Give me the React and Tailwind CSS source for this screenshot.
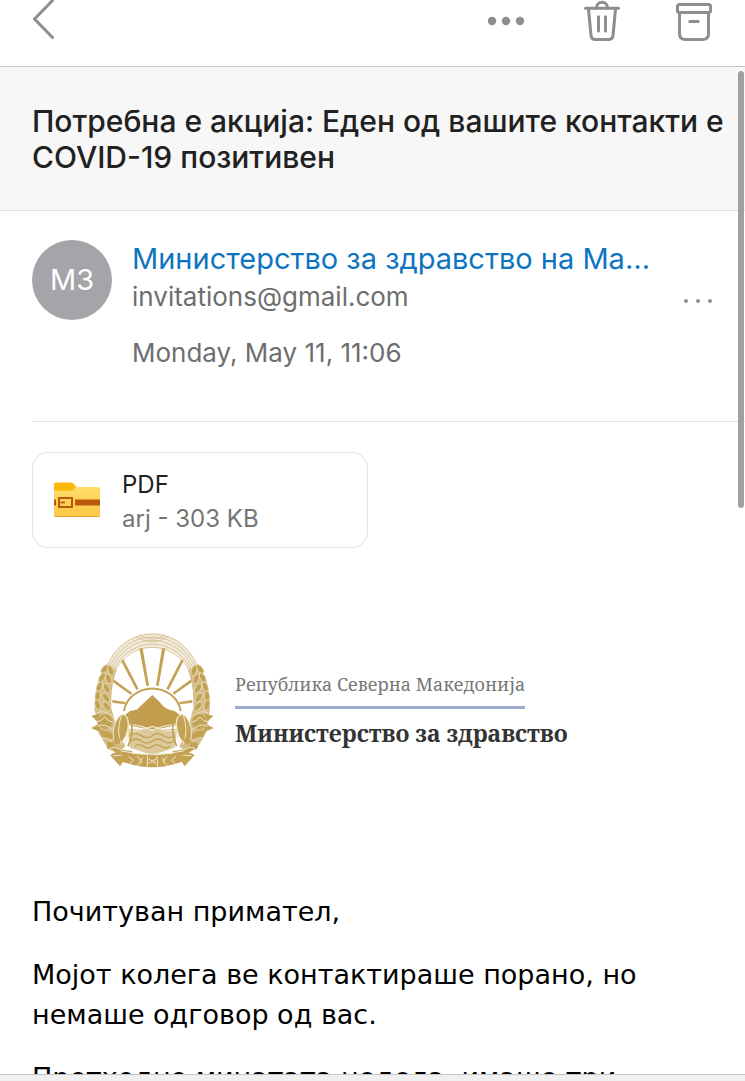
import React from 'react';

const message = {
  subject: 'Потребна е акција: Еден од вашите контакти е COVID-19 позитивен',
  initials: 'МЗ',
  sender: 'Министерство за здравство на Македонија',
  email: 'invitations@gmail.com',
  date: 'Monday, May 11, 11:06',
  attachment: { name: 'PDF', info: 'arj - 303 KB' },
  body: [
    'Почитуван примател,',
    'Мојот колега ве контактираше порано, но немаше одговор од вас.',
    'Претходно минатата недела, имаше три',
  ],
};

function BackIcon() {
  return (
    <svg width="22" height="42" viewBox="0 0 22 42" fill="none" stroke="#8e8e8e" strokeWidth="3" strokeLinecap="round" strokeLinejoin="round">
      <path d="M20.5 0.5 L2.5 19 L20.5 37.5" />
    </svg>
  );
}

function DotsIcon() {
  return (
    <svg width="40" height="42" viewBox="0 0 40 42" fill="#8e8e8e">
      <circle cx="4" cy="21" r="4.2" />
      <circle cx="18" cy="21" r="4.2" />
      <circle cx="32" cy="21" r="4.2" />
    </svg>
  );
}

function TrashIcon() {
  return (
    <svg width="36" height="42" viewBox="0 0 36 42" fill="none" stroke="#8e8e8e" strokeWidth="3" strokeLinecap="round" strokeLinejoin="round">
      <path d="M1.5 8.3 H34.5" />
      <path d="M12.5 8 C12.5 4.5 15 2.2 18 2.2 C21 2.2 23.5 4.5 23.5 8" />
      <path d="M4.5 9 L7 35.5 Q7.4 39.5 11.5 39.5 H24.5 Q28.6 39.5 29 35.5 L31.5 9" />
      <path d="M14.5 16.8 V31 M21.5 16.8 V31" />
    </svg>
  );
}

function ArchiveIcon() {
  return (
    <svg width="36" height="42" viewBox="0 0 36 42" fill="none" stroke="#8e8e8e" strokeWidth="3" strokeLinecap="round" strokeLinejoin="round">
      <rect x="1.5" y="4.5" width="33" height="8" rx="2" />
      <path d="M3.5 13 V33.5 Q3.5 39.5 9.5 39.5 H26.5 Q32.5 39.5 32.5 33.5 V13" />
      <path d="M13.8 21.5 H22.2" />
    </svg>
  );
}

function ArchiveFolderIcon() {
  return (
    <svg width="46" height="36" viewBox="0 0 46 36">
      <defs>
        <linearGradient id="folder" x1="0" y1="0" x2="0" y2="1">
          <stop offset="0" stopColor="#ffdc69" />
          <stop offset="1" stopColor="#fcc846" />
        </linearGradient>
      </defs>
      <path d="M0 8 H18 L23 5 H44 Q46 5 46 7 V32.5 Q46 34.5 44 34.5 H2 Q0 34.5 0 32.5 Z" fill="url(#folder)" />
      <path d="M0 33 Q0 34.5 2 34.5 H44 Q46 34.5 46 33" fill="none" stroke="#e0a030" />
      <path d="M2 0.5 H17 Q18.5 0.5 19.5 1.5 L22.5 5 L19.5 7.8 Q18.5 8.8 17 8.8 H0 V2.5 Q0 0.5 2 0.5 Z" fill="#fbb90c" />
      <rect x="0" y="17.5" width="2" height="6" fill="#b9580d" />
      <rect x="21" y="17.5" width="25" height="6" fill="#b9580d" />
      <rect x="5" y="16" width="13" height="9" fill="none" stroke="#b9580d" strokeWidth="2" />
      <path d="M6.5 20.5 H11" stroke="#b9580d" strokeWidth="1.8" />
    </svg>
  );
}

const rays = [
  [178, 84, 188, 84, 207, 196, 199, 196],
  [256, 84, 246, 84, 228, 196, 236, 196],
  [123, 121, 130, 117, 176, 205, 169, 209],
  [311, 121, 304, 117, 259, 205, 266, 209],
  [97, 184, 101, 177, 156, 217, 152, 223],
  [337, 184, 333, 177, 278, 217, 282, 223],
  [97, 247, 97, 239, 137, 245, 136, 252],
  [337, 247, 337, 239, 298, 245, 299, 252],
];

// [x, y, angle] of each grain on the left half of the wreath
const grains = [
  [74, 146, 40], [92, 150, -20], [66, 172, 30], [86, 176, -25], [58, 200, 20], [80, 204, -30],
  [53, 228, 5], [78, 232, -35], [53, 254, -15], [80, 258, -40],
];

function WreathSide() {
  return (
    <g>
      <path d="M84 132 C56 160 42 210 44 268 L50 300 L56 338 L76 372 L104 396 L136 380 L106 310 L94 262 C92 220 98 180 110 150 Z" fill="#d3bb84" />
      {grains.map(([x, y, a]) => (
        <ellipse key={`${x}-${y}`} cx={x} cy={y} rx="8" ry="16" transform={`rotate(${a} ${x} ${y})`} fill="#c4a253" stroke="#f0e6cf" strokeWidth="2" />
      ))}
      <circle cx="76" cy="304" r="22" fill="#c4a253" />
      <path d="M34 286 L60 280 L52 304 Z M33 323 L58 310 L62 336 Z" fill="#c4a253" />
      <path d="M50 278 Q72 266 100 290 M48 304 Q62 306 74 290 Q84 304 100 306 M52 318 Q76 306 98 330" fill="none" stroke="#f0e6cf" strokeWidth="3" />
      <path d="M58 334 Q82 322 106 350 Q88 364 66 350 Z" fill="#c4a253" />
      <ellipse cx="122" cy="326" rx="21" ry="44" transform="rotate(12 122 326)" fill="#c4a253" stroke="#f0e6cf" strokeWidth="3" />
      <path d="M124 286 Q108 330 124 372 M142 290 Q154 330 134 374" fill="none" stroke="#f0e6cf" strokeWidth="3" />
      <path d="M148 284 Q166 330 144 378" fill="none" stroke="#c4a253" strokeWidth="5" />
      <circle cx="92" cy="376" r="12" fill="#c4a253" />
      <circle cx="112" cy="362" r="10" fill="#c4a253" />
      <path d="M92 378 Q120 400 156 398" fill="none" stroke="#c4a253" strokeWidth="14" />
      <path d="M90 404 L128 386 L152 418 L132 420 L120 438 Z" fill="#c4a253" />
      <path d="M68 352 Q92 354 96 366 M84 388 Q104 372 130 394 M100 406 L134 404" fill="none" stroke="#f0e6cf" strokeWidth="3" />
    </g>
  );
}

function Emblem() {
  return (
    <svg className="shrink-0" width="125" height="137" viewBox="30 35 375 411" role="img" aria-label="Грб">
      <path d="M72 160 C92 90 145 40 217 40 C289 40 342 90 362 160 L332 166 C320 112 275 82 217 82 C159 82 114 112 102 166 Z" fill="#f1eadb" />
      <g fill="none" stroke="#d2bd8b" strokeWidth="2.5">
        <path d="M78 144 C104 80 155 41 217 41 C279 41 330 80 356 144" />
        <path d="M84 148 C108 92 157 50 217 50 C277 50 326 92 350 148" />
        <path d="M90 152 C112 102 159 60 217 60 C275 60 322 102 344 152" />
        <path d="M96 156 C116 112 161 71 217 71 C273 71 318 112 338 156" />
        <path d="M101 160 C120 118 163 81 217 81 C271 81 314 118 333 160" />
        <path d="M168 48 Q217 82 266 48 M178 44 Q217 68 256 44" />
      </g>
      {rays.map((r) => (
        <polygon key={r.join()} points={r.join(' ')} fill="#c4a253" />
      ))}
      <path d="M132 272 A86 80 0 0 1 302 272" fill="none" stroke="#c4a253" strokeWidth="6" />
      <path d="M132 286 L150 272 L170 268 L217 224 L236 242 L252 260 L268 268 L284 272 L302 286 L292 314 L217 330 L142 314 Z" fill="#c19d4d" />
      <path d="M142 326 H292 L284 382 L217 404 L150 382 Z" fill="#dcc99c" />
      <path d="M148 332 Q180 332 217 318 Q254 332 286 332 M148 312 Q190 316 217 330 Q244 316 286 312" fill="none" stroke="#f0e6cf" strokeWidth="4" />
      <g fill="none" stroke="#c4a253" strokeWidth="4">
        <path d="M150 346 Q166 334 184 346 T217 346 T250 346 T284 346" />
        <path d="M152 362 Q168 350 184 362 T217 362 T250 362 T282 362" />
        <path d="M164 378 Q174 368 190 378 T217 378 T244 378 T270 378" />
      </g>
      <WreathSide />
      <g transform="translate(434 0) scale(-1 1)">
        <WreathSide />
      </g>
      <path d="M124 396 Q217 412 310 396 L306 424 Q217 458 128 424 Z" fill="#c4a253" />
      <g fill="none" stroke="#f0e6cf" strokeWidth="3">
        <path d="M146 408 L160 420 L148 430 M172 408 L186 424 L170 436 M262 408 L248 424 L264 436 M288 408 L274 420 L286 430" />
        <path d="M203 406 L201 442 M231 406 L233 442 M206 416 L228 430 M228 416 L206 430 M188 412 L178 424 M246 412 L256 424" />
        <path d="M124 392 Q217 412 310 392" />
      </g>
    </svg>
  );
}

export default function App() {
  return (
    <div className="flex h-screen flex-col bg-white font-['Inter',sans-serif] text-[#212121]">
      <header className="flex shrink-0 items-start justify-between border-b border-[#c6c6c8] pr-[33px] pb-6 pl-8">
        <button type="button" aria-label="Back"><BackIcon /></button>
        <div className="flex gap-14">
          <button type="button" aria-label="More"><DotsIcon /></button>
          <button type="button" aria-label="Delete"><TrashIcon /></button>
          <button type="button" aria-label="Archive"><ArchiveIcon /></button>
        </div>
      </header>

      <div className="relative min-h-0 flex-1">
        <main className="h-full overflow-y-auto [scrollbar-width:none]">
          <div className="border-b border-[#e1e1e1] bg-[#f7f7f7] pt-9 pr-4 pb-[35px] pl-8">
            <h1 className="text-[30px] leading-9 font-medium">{message.subject}</h1>
          </div>

          <section className="ml-8 flex border-b border-[#e1e1e1] pt-7 pr-8 pb-[50px]">
            <div className="mt-px flex size-20 shrink-0 items-center justify-center rounded-full bg-[#a5a4a9] text-[29px] text-white">
              {message.initials}
            </div>
            <div className="ml-5 min-w-0 flex-1">
              <div className="w-[520px] max-w-full truncate text-[29px] leading-10 text-[#0f74c0]">{message.sender}</div>
              <div className="flex items-center justify-between">
                <span className="text-[26px] leading-9 text-[#6e6e6e]">{message.email}</span>
                <button type="button" aria-label="Details">
                  <svg width="30" height="16" viewBox="0 0 30 16" fill="#8e8e8e">
                    <circle cx="3" cy="12" r="2" />
                    <circle cx="15" cy="12" r="2" />
                    <circle cx="27" cy="12" r="2" />
                  </svg>
                </button>
              </div>
              <div className="mt-5 text-[26px] leading-9 text-[#6e6e6e]">{message.date}</div>
            </div>
          </section>

          <section className="px-8 pt-[30px]">
            <button type="button" className="flex h-24 w-[336px] items-center rounded-2xl border border-[#e1e1e1] pl-[21px] text-left">
              <ArchiveFolderIcon />
              <span className="ml-[22px] flex flex-col pt-1 text-[24px] leading-[34px]">
                <span>{message.attachment.name}</span>
                <span className="text-[#757575]">{message.attachment.info}</span>
              </span>
            </button>
          </section>

          <article className="px-8 pt-[84px] font-['DejaVu_Sans',sans-serif] text-[27px] leading-10 text-black">
            <div className="flex items-center pl-[58px] font-['Noto_Serif','DejaVu_Serif',serif]">
              <Emblem />
              <div className="ml-5 pt-2">
                <div className="inline-block border-b-[3px] border-[#9dadce] pb-2 text-[18px] leading-7 text-[#777777]">
                  Република Северна Македонија
                </div>
                <div className="mt-2 text-[23px] leading-8 font-bold text-[#333333]">Министерство за здравство</div>
              </div>
            </div>
            <div className="mt-[123px] space-y-[23px]">
              {message.body.map((text) => (
                <p key={text}>{text}</p>
              ))}
            </div>
          </article>
        </main>
        <div className="absolute top-1 right-px h-[437px] w-[6px] rounded-full bg-[#a0a0a0]" />
      </div>

      <footer className="h-[7px] shrink-0 border-t border-[#c6c6c8] bg-[#f0f0f0]" />
    </div>
  );
}
